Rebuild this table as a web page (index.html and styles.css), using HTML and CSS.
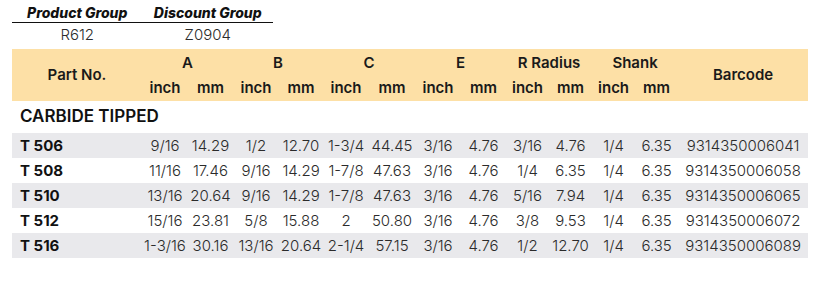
FILE: index.html
```html
<!DOCTYPE html>
<html lang="en">
<head>
  <meta charset="UTF-8" />
  <title>T 500 Carbide Tipped</title>
  <link rel="stylesheet" href="styles.css">
</head>
<body>
  <table class="groups">
    <tr>
      <th>Product Group</th>
      <th>Discount Group</th>
    </tr>
    <tr>
      <td>R612</td>
      <td>Z0904</td>
    </tr>
  </table>

  <table class="parts">
    <colgroup>
      <col class="c-part">
      <col class="w46"><col class="w45">
      <col class="w46"><col class="w44">
      <col class="w46"><col class="w46">
      <col class="w46"><col class="w45">
      <col class="w43"><col class="w43">
      <col class="w43"><col class="w43">
      <col class="c-barcode">
    </colgroup>
    <thead>
      <tr class="top">
        <th rowspan="2" class="part">Part No.</th>
        <th colspan="2">A</th>
        <th colspan="2">B</th>
        <th colspan="2">C</th>
        <th colspan="2">E</th>
        <th colspan="2">R Radius</th>
        <th colspan="2">Shank</th>
        <th rowspan="2">Barcode</th>
      </tr>
      <tr class="units">
        <th>inch</th><th>mm</th>
        <th>inch</th><th>mm</th>
        <th>inch</th><th>mm</th>
        <th>inch</th><th>mm</th>
        <th>inch</th><th>mm</th>
        <th>inch</th><th>mm</th>
      </tr>
    </thead>
    <tbody>
      <tr class="section">
        <td colspan="14">CARBIDE TIPPED</td>
      </tr>
      <tr class="odd">
        <td class="part">T 506</td>
        <td>9/16</td><td>14.29</td><td>1/2</td><td>12.70</td><td>1-3/4</td><td>44.45</td>
        <td>3/16</td><td>4.76</td><td>3/16</td><td>4.76</td><td>1/4</td><td>6.35</td>
        <td>9314350006041</td>
      </tr>
      <tr>
        <td class="part">T 508</td>
        <td>11/16</td><td>17.46</td><td>9/16</td><td>14.29</td><td>1-7/8</td><td>47.63</td>
        <td>3/16</td><td>4.76</td><td>1/4</td><td>6.35</td><td>1/4</td><td>6.35</td>
        <td>9314350006058</td>
      </tr>
      <tr class="odd">
        <td class="part">T 510</td>
        <td>13/16</td><td>20.64</td><td>9/16</td><td>14.29</td><td>1-7/8</td><td>47.63</td>
        <td>3/16</td><td>4.76</td><td>5/16</td><td>7.94</td><td>1/4</td><td>6.35</td>
        <td>9314350006065</td>
      </tr>
      <tr>
        <td class="part">T 512</td>
        <td>15/16</td><td>23.81</td><td>5/8</td><td>15.88</td><td>2</td><td>50.80</td>
        <td>3/16</td><td>4.76</td><td>3/8</td><td>9.53</td><td>1/4</td><td>6.35</td>
        <td>9314350006072</td>
      </tr>
      <tr class="odd">
        <td class="part">T 516</td>
        <td>1-3/16</td><td>30.16</td><td>13/16</td><td>20.64</td><td>2-1/4</td><td>57.15</td>
        <td>3/16</td><td>4.76</td><td>1/2</td><td>12.70</td><td>1/4</td><td>6.35</td>
        <td>9314350006089</td>
      </tr>
    </tbody>
  </table>
</body>
</html>
```

FILE: styles.css
```css
body {
  margin: 0;
  padding: 0 12px;
  font-family: 'Inter', 'Liberation Sans', sans-serif;
  color: #2b2b2b;
  background: #fff;
}
table {
  border-collapse: collapse;
  border-spacing: 0;
}
.groups {
  table-layout: fixed;
  width: 261px;
}
.groups th {
  width: 130px;
  font-size: 14px;
  line-height: 17px;
  font-weight: 800;
  font-style: italic;
  color: #111;
  padding: 4px 0 1px;
  border-bottom: 1.5px solid #111;
}
.groups td {
  text-align: center;
  font-size: 15px;
  line-height: 18px;
  font-weight: 300;
  padding: 3px 0 5px;
}
.parts {
  table-layout: fixed;
  width: 796px;
}
.c-part { width: 130px; }
.c-barcode { width: 130px; }
.w46 { width: 46px; }
.w45 { width: 45px; }
.w44 { width: 44px; }
.w43 { width: 43px; }
.parts th {
  background: #fde0a6;
  color: #1a1a1a;
  font-weight: 600;
  font-size: 15px;
  line-height: 18px;
  text-align: center;
  padding: 0;
}
.parts .top th { height: 27px; }
.parts .units th { height: 23px; padding-bottom: 2px; }
.parts td {
  text-align: center;
  font-size: 15px;
  line-height: 18px;
  font-weight: 300;
  color: #2b2b2b;
  height: 25px;
  padding: 0;
  white-space: nowrap;
}
.parts td.part {
  text-align: left;
  padding-left: 8px;
  font-weight: 700;
  color: #111;
}
.parts .section td {
  text-align: left;
  height: 29px;
  padding: 0 0 3px 8px;
  font-weight: 600;
  font-size: 17px;
  color: #111;
}
.parts .odd td {
  background: #e9e9ec;
}
```
